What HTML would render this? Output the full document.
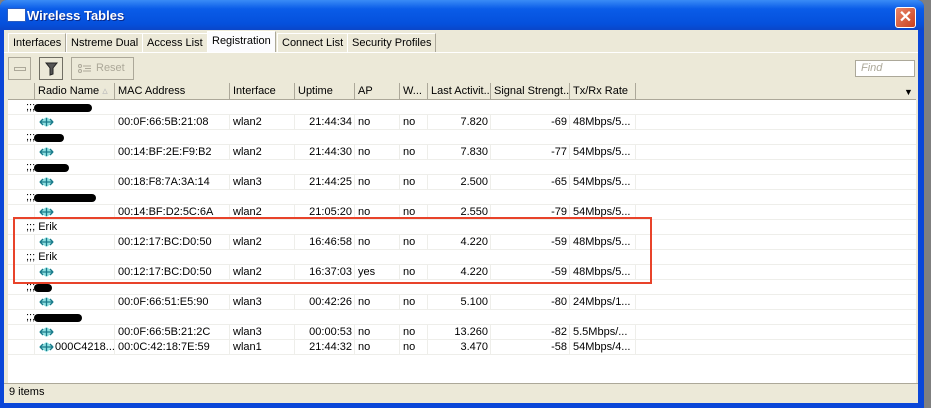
<!DOCTYPE html>
<html><head><meta charset="utf-8"><style>
*{margin:0;padding:0;box-sizing:border-box}
body{width:931px;height:408px;overflow:hidden;background:#7f7f7f;font-family:"Liberation Sans",Arial,sans-serif;font-size:11px;color:#000;position:relative}
.a{position:absolute}
.win{left:0;top:0;width:924px;height:408px;background:#0a46d8;border-radius:7px 7px 0 0}
.title{left:0;top:0;width:924px;height:30px;background:linear-gradient(#3a8cf6,#0a5ce8 30%,#0550dc 80%,#0a46c8);border-radius:7px 7px 0 0}
.body{left:4px;top:30px;width:914px;height:373px;background:#ece9d8}
.tab{top:33px;height:19px;border:1px solid #fff;border-right-color:#aca899;border-bottom:none;line-height:18px;padding:0 4px;font-size:11px}
.btn{border:1px solid #aca899;background:#ece9d8;height:23px;top:57px}
.hdr{top:83px;height:17px;background:#ece9d8;border-bottom:1px solid #aca899}
.hc{top:0;height:17px;border-right:1px solid #aca899;line-height:17px;padding-left:3px;white-space:nowrap;overflow:hidden}
.grid{left:8px;top:100px;width:908px;height:283px;background:#fff}
.row{left:0;width:908px;height:15px;border-bottom:1px solid #eeeeea}
.c{top:0;height:15px;line-height:15px;white-space:nowrap;border-right:1px solid #eeeeea;overflow:hidden}
.blob{height:8px;background:#000;border-radius:4px;top:4px}
</style></head><body>
<div class="a win"></div>
<div class="a title"></div>
<div class="a" style="left:8px;top:9px;width:17px;height:12px;background:#fff;border-top:3px solid #fff;box-shadow:0 0 0 1px #2a5cc0"></div>
<div class="a" style="left:27px;top:8px;color:#fff;font-weight:bold;font-size:13px;text-shadow:1px 1px #0a2a8a">Wireless Tables</div>
<div class="a" style="left:895px;top:7px;width:21px;height:21px;background:linear-gradient(135deg,#e9866a,#c9401e);border:1px solid #fff;border-radius:3px;color:#fff;font-weight:bold;font-size:16px;line-height:19px;text-align:center">✕</div>
<div class="a body"></div>
<div class="a tab" style="left:8px">Interfaces</div>
<div class="a tab" style="left:66px">Nstreme Dual</div>
<div class="a tab" style="left:142px">Access List</div>
<div class="a tab" style="left:207px;top:31px;height:22px;background:#fcfcfe">Registration</div>
<div class="a tab" style="left:277px">Connect List</div>
<div class="a tab" style="left:347px">Security Profiles</div>
<div class="a" style="left:4px;top:52px;width:914px;height:1px;background:#fff"></div>
<div class="a btn" style="left:8px;width:23px"><div class="a" style="left:5px;top:9px;width:12px;height:4px;border:1px solid #aca899"></div></div>
<div class="a btn" style="left:39px;width:24px;border-color:#716f64"><svg class="a" style="left:5px;top:4px" width="13" height="14"><path d="M1 1H12L8 6V12L5 13V6Z" fill="#555" stroke="#222"/></svg></div>
<div class="a btn" style="left:71px;width:63px;color:#aca899;line-height:21px;padding-left:24px">Reset<svg class="a" style="left:6px;top:6px" width="14" height="10"><circle cx="2" cy="2" r="1.5" fill="none" stroke="#aca899"/><circle cx="2" cy="7" r="1.5" fill="none" stroke="#aca899"/><path d="M5 2H13M5 7H13M7 4.5H13" stroke="#aca899"/></svg></div>
<div class="a" style="left:855px;top:60px;width:60px;height:17px;background:#fff;border:1px solid #aca899;color:#aca899;font-style:italic;line-height:15px;padding-left:5px">Find</div>
<div class="a hdr" style="left:8px;width:908px">
<div class="a hc" style="left:0;width:27px"></div>
<div class="a hc" style="left:27px;width:80px">Radio Name <span style="color:#bbb">▵</span></div>
<div class="a hc" style="left:107px;width:115px">MAC Address</div>
<div class="a hc" style="left:222px;width:65px">Interface</div>
<div class="a hc" style="left:287px;width:60px">Uptime</div>
<div class="a hc" style="left:347px;width:45px">AP</div>
<div class="a hc" style="left:392px;width:28px">W...</div>
<div class="a hc" style="left:420px;width:63px">Last Activit...</div>
<div class="a hc" style="left:483px;width:79px">Signal Strengt...</div>
<div class="a hc" style="left:562px;width:66px">Tx/Rx Rate</div>
<div class="a" style="left:896px;top:4px;font-size:9px">▼</div>
</div>
<div class="a grid" id="g"></div>
<div class="a" style="left:4px;top:383px;width:914px;height:1px;background:#aca899"></div>
<div class="a" style="left:9px;top:386px">9 items</div>
<div class="a" style="left:13px;top:217px;width:639px;height:67px;border:2px solid #e8432a"></div>
<script>
var rows=[
['c',58],['d','','00:0F:66:5B:21:08','wlan2','21:44:34','no','no','7.820','-69','48Mbps/5...'],
['c',30],['d','','00:14:BF:2E:F9:B2','wlan2','21:44:30','no','no','7.830','-77','54Mbps/5...'],
['c',35],['d','','00:18:F8:7A:3A:14','wlan3','21:44:25','no','no','2.500','-65','54Mbps/5...'],
['c',62],['d','','00:14:BF:D2:5C:6A','wlan2','21:05:20','no','no','2.550','-79','54Mbps/5...'],
['e'],['d','','00:12:17:BC:D0:50','wlan2','16:46:58','no','no','4.220','-59','48Mbps/5...'],
['e'],['d','','00:12:17:BC:D0:50','wlan2','16:37:03','yes','no','4.220','-59','48Mbps/5...'],
['c',18],['d','','00:0F:66:51:E5:90','wlan3','00:42:26','no','no','5.100','-80','24Mbps/1...'],
['c',48],['d','','00:0F:66:5B:21:2C','wlan3','00:00:53','no','no','13.260','-82','5.5Mbps/...'],
['d','000C4218...','00:0C:42:18:7E:59','wlan1','21:44:32','no','no','3.470','-58','54Mbps/4...']];
var cols=[[0,27],[27,80],[107,115],[222,65],[287,60],[347,45],[392,28],[420,63],[483,79],[562,66]];
var icon='<svg style="position:absolute;left:4px;top:2px" width="15" height="10"><path d="M7.5 0L15 5L7.5 10L0 5Z" fill="#8fe0e0"/><path d="M1 5H14M1 5L4 2M1 5L4 8M14 5L11 2M14 5L11 8M7.5 1V9" stroke="#1a7a8a" stroke-width="1.3" fill="none"/></svg>';
var h='';
rows.forEach(function(r,i){
 h+='<div class="a row" style="top:'+(i*15)+'px">';
 if(r[0]=='c'||r[0]=='e'){
  h+='<div class="a" style="left:18px;top:0px;line-height:14px">;;; '+(r[0]=='e'?'Erik':'')+'</div>';
  if(r[0]=='c')h+='<div class="a blob" style="left:26px;width:'+r[1]+'px"></div>';
 } else {
  for(var k=0;k<10;k++){
   var t=k==0?'':r[k], al=(k==4||k==7||k==8)?'right':'left';
   var st='left:'+cols[k][0]+'px;width:'+cols[k][1]+'px;text-align:'+al+';padding:0 '+(al=='right'?'2px':'0')+' 0 '+(al=='left'?'3px':'0');
   if(k==1) st+=';padding-left:'+(t?'20px':'0');
   h+='<div class="a c" style="'+st+'">'+(k==1?icon:'')+t+'</div>';
  }
 }
 h+='</div>';
});
document.getElementById('g').innerHTML=h;
</script>
</body></html>
